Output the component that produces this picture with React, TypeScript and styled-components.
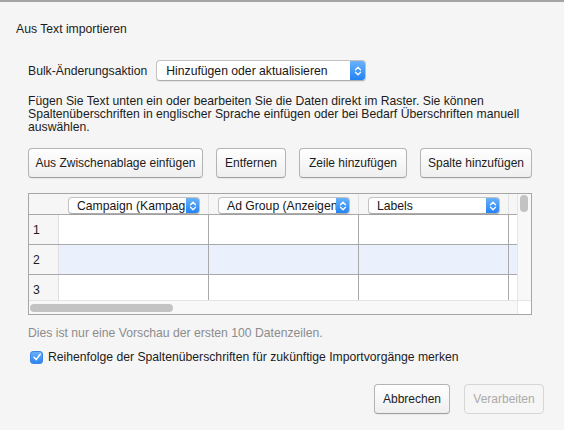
import React from "react";
import styled, { createGlobalStyle } from "styled-components";

const GlobalStyle = createGlobalStyle`
    html, body {
        margin: 0;
        padding: 0;
        background: #f5f5f5;
    }
    body {
        font-family: "Liberation Sans", Arial, sans-serif;
        font-size: 12.2px;
        color: #1c1c1c;
    }
    * {
        box-sizing: border-box;
    }
`;

const Window = styled.div`
    width: 564px;
    height: 430px;
    border-top: 2px solid #a4a4a4;
    background: #f5f5f5;
    display: flex;
    flex-direction: column;
`;

const Title = styled.div`
    padding: 20px 0 0 16px;
    line-height: 14px;
`;

const Content = styled.div`
    display: flex;
    flex-direction: column;
    padding: 0 32px 0 28px;
`;

const ActionRow = styled.div`
    display: flex;
    align-items: center;
    gap: 9px;
    height: 21px;
    margin-top: 24px;
`;

const SelectBox = styled.div<{ $width: number; $height: number }>`
    display: flex;
    width: ${(p) => p.$width}px;
    height: ${(p) => p.$height}px;
    background: #fff;
    border: 1px solid #c2c2c2;
    border-bottom-color: #acacac;
    border-radius: 4px;
    box-shadow: 0 1px 1px rgba(0, 0, 0, 0.07);
    overflow: hidden;
`;

const SelectValue = styled.div<{ $pad: number }>`
    flex: 1;
    min-width: 0;
    padding-left: ${(p) => p.$pad}px;
    display: flex;
    align-items: center;
    white-space: nowrap;
    overflow: hidden;
    color: #161616;
`;

const SelectArrow = styled.div<{ $width: number }>`
    flex: none;
    width: ${(p) => p.$width}px;
    margin: -1px -1px -1px 0;
    background: linear-gradient(#6db5fb, #1f80f3);
    border-radius: 0 4px 4px 0;
    display: flex;
    align-items: center;
    justify-content: center;
`;

const Description = styled.div`
    margin-top: 14px;
    line-height: 13px;
`;

const Toolbar = styled.div`
    display: flex;
    gap: 13px;
    margin-top: 14px;
`;

const Button = styled.button<{ $width: number }>`
    width: ${(p) => p.$width}px;
    height: 30px;
    padding: 0;
    font-family: inherit;
    font-size: 12px;
    color: #1c1c1c;
    background: linear-gradient(#ffffff, #efefef);
    border: 1px solid #b4b4b4;
    border-bottom-color: #9f9f9f;
    border-radius: 4px;
    box-shadow: 0 1px 1px rgba(0, 0, 0, 0.05);

    &:disabled {
        color: #ababab;
        background: #f6f6f6;
        border-color: #d6d6d6;
        box-shadow: none;
    }
`;

const Grid = styled.div`
    margin-top: 15px;
    height: 122px;
    border: 1px solid #a6a6a6;
    background: #fff;
    display: flex;
    flex-direction: column;
`;

const GridBody = styled.div`
    display: flex;
    height: 106px;
`;

const TableArea = styled.div`
    flex: 1;
    overflow: hidden;
    display: flex;
    flex-direction: column;
`;

const HeaderRow = styled.div`
    display: flex;
    flex: none;
    height: 21px;
    background: #f6f6f6;
    border-bottom: 1px solid #a9a9a9;
`;

const RowNumHeader = styled.div`
    flex: none;
    width: 30px;
`;

const HeaderCell = styled.div`
    flex: none;
    width: 150px;
    padding: 3px 0 0 9px;
    border-right: 1px solid #e1e1e1;
`;

const Row = styled.div<{ $highlight?: boolean }>`
    display: flex;
    flex: none;
    height: 30px;
    border-bottom: 1px solid #a9a9a9;
    background: ${(p) => (p.$highlight ? "#eaf1fd" : "#fff")};
`;

const RowNum = styled.div`
    flex: none;
    width: 30px;
    padding-left: 4px;
    display: flex;
    align-items: center;
    background: #f6f6f6;
    border-right: 1px solid #dedede;
`;

const Cell = styled.div`
    flex: none;
    width: 150px;
    border-right: 1px solid #a9a9a9;
`;

const VScroll = styled.div`
    flex: none;
    width: 14px;
    background: #f8f8f8;
    border-left: 1px solid #e6e6e6;
    padding: 1px 0 0 2px;
`;

const VThumb = styled.div`
    width: 8px;
    height: 17px;
    border-radius: 4px;
    background: #c3c3c3;
`;

const HScroll = styled.div`
    display: flex;
    height: 14px;
`;

const HTrack = styled.div`
    flex: 1;
    background: #f8f8f8;
    border-top: 1px solid #e4e4e4;
    padding: 3px 0 0 1px;
`;

const HThumb = styled.div`
    width: 143px;
    height: 8px;
    border-radius: 4px;
    background: #c3c3c3;
`;

const Corner = styled.div`
    flex: none;
    width: 14px;
    background: #fff;
    border-top: 1px solid #e4e4e4;
    border-left: 1px solid #e6e6e6;
`;

const Note = styled.div`
    margin-top: 11px;
    line-height: 14px;
    color: #8c8c8c;
`;

const CheckRow = styled.label`
    display: flex;
    align-items: center;
    gap: 5px;
    height: 14px;
    margin-top: 10px;
    padding-left: 2px;
`;

const CheckBox = styled.span`
    flex: none;
    width: 13px;
    height: 13px;
    border-radius: 3px;
    background: linear-gradient(#68b0fb, #2a86f4);
    border: 1px solid #3b86e6;
    display: flex;
    align-items: center;
    justify-content: center;
`;

const Footer = styled.div`
    display: flex;
    justify-content: flex-end;
    gap: 14px;
    margin-top: 20px;
    padding-right: 20px;
`;

function Chevrons() {
    return (
        <svg width="8" height="12" viewBox="0 0 8 12">
            <path d="M1.5 4.8 L4 2.3 L6.5 4.8 M1.5 7.2 L4 9.7 L6.5 7.2" fill="none" stroke="#fff" strokeWidth="1.3" strokeLinecap="round" strokeLinejoin="round" />
        </svg>
    );
}

function Select({ value, width, height, arrow, pad }: { value: string; width: number; height: number; arrow: number; pad: number }) {
    return (
        <SelectBox $width={width} $height={height}>
            <SelectValue $pad={pad}>{value}</SelectValue>
            <SelectArrow $width={arrow}>
                <Chevrons />
            </SelectArrow>
        </SelectBox>
    );
}

const columns = ["Campaign (Kampagne)", "Ad Group (Anzeigengruppe)", "Labels"];
const rows = [1, 2, 3];

function App() {
    return (
        <>
            <GlobalStyle />
            <Window>
                <Title>Aus Text importieren</Title>
                <Content>
                    <ActionRow>
                        <span>Bulk-Änderungsaktion</span>
                        <Select value="Hinzufügen oder aktualisieren" width={210} height={21} arrow={16} pad={9} />
                    </ActionRow>
                    <Description>
                        Fügen Sie Text unten ein oder bearbeiten Sie die Daten direkt im Raster. Sie können
                        <br />
                        Spaltenüberschriften in englischer Sprache einfügen oder bei Bedarf Überschriften manuell
                        <br />
                        auswählen.
                    </Description>
                    <Toolbar>
                        <Button $width={175}>Aus Zwischenablage einfügen</Button>
                        <Button $width={70}>Entfernen</Button>
                        <Button $width={108}>Zeile hinzufügen</Button>
                        <Button $width={112}>Spalte hinzufügen</Button>
                    </Toolbar>
                    <Grid>
                        <GridBody>
                            <TableArea>
                                <HeaderRow>
                                    <RowNumHeader />
                                    {columns.map((c) => (
                                        <HeaderCell key={c}>
                                            <Select value={c} width={132} height={17} arrow={14} pad={8} />
                                        </HeaderCell>
                                    ))}
                                </HeaderRow>
                                {rows.map((r) => (
                                    <Row key={r} $highlight={r === 2}>
                                        <RowNum>{r}</RowNum>
                                        {columns.map((c) => (
                                            <Cell key={c} />
                                        ))}
                                    </Row>
                                ))}
                            </TableArea>
                            <VScroll>
                                <VThumb />
                            </VScroll>
                        </GridBody>
                        <HScroll>
                            <HTrack>
                                <HThumb />
                            </HTrack>
                            <Corner />
                        </HScroll>
                    </Grid>
                    <Note>Dies ist nur eine Vorschau der ersten 100 Datenzeilen.</Note>
                    <CheckRow>
                        <CheckBox>
                            <svg width="10" height="10" viewBox="0 0 10 10">
                                <path d="M2 5.2 L4.2 7.6 L8.2 2.2" fill="none" stroke="#fff" strokeWidth="1.5" strokeLinecap="round" strokeLinejoin="round" />
                            </svg>
                        </CheckBox>
                        <span>Reihenfolge der Spaltenüberschriften für zukünftige Importvorgänge merken</span>
                    </CheckRow>
                </Content>
                <Footer>
                    <Button $width={76}>Abbrechen</Button>
                    <Button $width={80} disabled>
                        Verarbeiten
                    </Button>
                </Footer>
            </Window>
        </>
    );
}

export default App;
